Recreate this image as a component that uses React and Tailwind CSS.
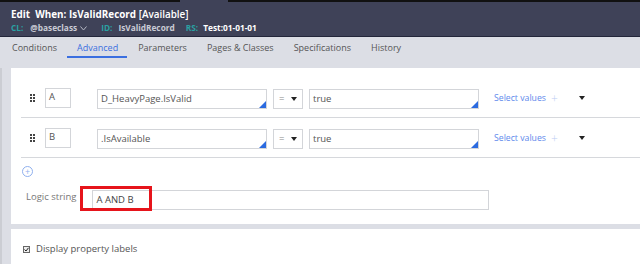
const ROWS = [
  { id: "A", left: "D_HeavyPage.IsValid" },
  { id: "B", left: ".IsAvailable" },
];

const TABS = ["Conditions", "Advanced", "Parameters", "Pages & Classes", "Specifications", "History"];

function Handle() {
  return (
    <div className="grid grid-cols-2 gap-x-[1px] gap-y-[1px]">
      {[0, 1, 2, 3, 4, 5].map((i) => (
        <span key={i} className="block h-[2px] w-[2px] bg-[#444]" />
      ))}
    </div>
  );
}

function Corner() {
  return (
    <svg className="absolute bottom-0 right-0" width="7" height="7" viewBox="0 0 7 7">
      <path d="M7 0 L7 7 L0 7 Z" fill="#2b6be0" />
    </svg>
  );
}

function Caret() {
  return (
    <svg width="6" height="4" viewBox="0 0 6 4">
      <path d="M0 0 L6 0 L3 4 Z" fill="#222" />
    </svg>
  );
}

function Row({ row }) {
  return (
    <div className="flex h-[40px] items-center border-b border-[#d6d8dc] pl-[9px]">
      <Handle />
      <div className="ml-[10px] flex h-[20px] w-[26px] items-center border border-[#d3d5d9] pl-[3px] text-[#555]">
        {row.id}
      </div>
      <div className="relative ml-[26px] mt-[3px] flex h-[20px] w-[170px] items-center border border-[#d3d5d9] pl-[3px] text-[#555]">
        {row.left}
        <Corner />
      </div>
      <div className="ml-[6px] mt-[3px] flex h-[20px] w-[30px] items-center justify-between border border-[#d3d5d9] pl-[5px] pr-[5px] text-[#888]">
        <span>=</span>
        <Caret />
      </div>
      <div className="relative ml-[6px] mt-[3px] flex h-[20px] w-[170px] items-center border border-[#d3d5d9] pl-[3px] text-[#555]">
        true
        <Corner />
      </div>
      <div className="ml-[15px] mt-[3px] flex items-center text-[8.7px] text-[#5e89ec]">
        Select values
        <span className="ml-[5px] text-[12px] font-light text-[#bccdf3]">+</span>
      </div>
      <div className="ml-[21px] mt-[1px]">
        <Caret />
      </div>
    </div>
  );
}

export default function App() {
  return (
    <div className="h-[264px] w-[640px] overflow-hidden bg-[#dcdee5] text-[9.5px] font-['Open_Sans',sans-serif]">
      <div className="relative h-[37px] border-b border-[#23263a] bg-[#3f4258] pl-[11px] pt-[7px]">
        <div className="absolute left-0 top-0 h-[2px] w-[180px] bg-[#111]" />
        <div className="absolute left-[228px] top-0 h-[2px] w-[412px] bg-[#111]" />
        <div className="text-[9.9px] font-bold leading-[14px] text-white">
          Edit&nbsp; When: IsValidRecord <span className="font-semibold">[Available]</span>
        </div>
        <div className="mt-[1px] flex items-center text-[8.3px] font-bold leading-[12px]">
          <span className="text-[#2aa0a2]">CL:</span>
          <span className="ml-[7px] text-[#c9cbd5]">@baseclass</span>
          <svg className="ml-[3px]" width="7" height="5" viewBox="0 0 7 5">
            <path d="M0.5 0.5 L3.5 4 L6.5 0.5" fill="none" stroke="#b5b8c5" strokeWidth="1" />
          </svg>
          <span className="ml-[14px] text-[#2aa0a2]">ID:</span>
          <span className="ml-[6px] text-[#c9cbd5]">IsValidRecord</span>
          <span className="ml-[11px] text-[#2aa0a2]">RS:</span>
          <span className="ml-[5px] text-white">Test:01-01-01</span>
        </div>
      </div>
      <div className="flex h-[31px] items-start pl-[12px] pt-[5px] text-[9px] leading-[12px] text-[#555]">
        {TABS.map((t) => (
          <div
            key={t}
            className={
              t === "Advanced"
                ? "relative mr-[20px] text-[#3b6fe0] after:absolute after:-left-[10px] after:-right-[9px] after:-bottom-[4px] after:h-[2px] after:bg-[#3b6fe0] after:content-['']"
                : "mr-[20px]"
            }
          >
            {t}
          </div>
        ))}
      </div>
      <div className="flex">
        <div className="w-[11px] border-l-2 border-[#cbcdd3]" />
        <div className="flex-1">
          <div className="h-[156px] bg-white pl-[10px] pt-[10px]">
            {ROWS.map((r) => (
              <Row key={r.id} row={r} />
            ))}
            <div className="ml-[1px] mt-[8px] flex h-[11px] w-[11px] items-center justify-center rounded-full border border-[#8fb0ee] text-[9px] leading-none text-[#8fb0ee]">
              +
            </div>
            <div className="mt-[9px] flex items-start">
              <span className="ml-[5px] mt-[4px] text-[#777]">Logic string</span>
              <div className="relative ml-[16px] h-[25px] pt-[4px]">
                <div className="absolute -left-[12px] top-0 h-[25px] w-[72px] border-[3px] border-[#e6141b]" />
                <div className="flex h-[20px] w-[397px] items-center border border-[#d3d5d9] pl-[3px] text-[#444]">
                  A AND B
                </div>
              </div>
            </div>
          </div>
          <div className="mt-[5px] flex h-[40px] items-center bg-white pl-[12px] text-[#555]">
            <span className="mr-[6px] flex h-[7px] w-[7px] items-center justify-center border border-[#666] bg-[#eee]">
              <svg width="5" height="5" viewBox="0 0 5 5">
                <path d="M0.5 2.5 L2 4 L4.5 0.8" fill="none" stroke="#222" strokeWidth="1" />
              </svg>
            </span>
            Display property labels
          </div>
        </div>
      </div>
    </div>
  );
}
